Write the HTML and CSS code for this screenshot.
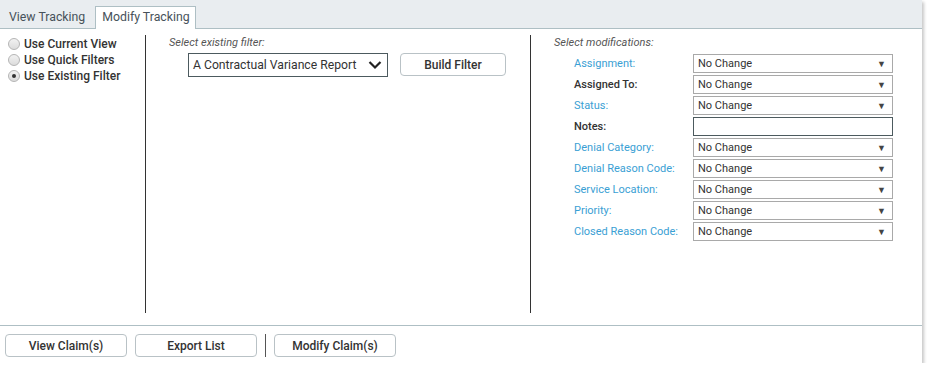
FILE: index.html
```html
<!DOCTYPE html>
<html>
<head>
<meta charset="utf-8">
<link rel="stylesheet" href="styles.css">
</head>
<body>
<div class="panel">
  <div class="tabbar">
    <div class="tab">View Tracking</div>
    <div class="tab active">Modify Tracking</div>
  </div>
  <div class="content">
    <div class="col col-left">
      <label class="radio"><span class="dot"></span>Use Current View</label>
      <label class="radio"><span class="dot"></span>Use Quick Filters</label>
      <label class="radio"><span class="dot checked"></span>Use Existing Filter</label>
    </div>
    <div class="col col-mid">
      <div class="caption">Select existing filter:</div>
      <div class="filter-row">
        <div class="bigselect">
          <span>A Contractual Variance Report</span>
          <svg class="chev" width="14" height="10" viewBox="0 0 14 10"><path d="M1.5 2 L7 7.5 L12.5 2" fill="none" stroke="#222" stroke-width="2.2"/></svg>
        </div>
        <button class="btn build">Build Filter</button>
      </div>
    </div>
    <div class="col col-right">
      <div class="caption">Select modifications:</div>
      <div class="mods">
        <div class="lbl link">Assignment:</div><div class="sel">No Change<span class="arr">▼</span></div>
        <div class="lbl bold">Assigned To:</div><div class="sel">No Change<span class="arr">▼</span></div>
        <div class="lbl link">Status:</div><div class="sel">No Change<span class="arr">▼</span></div>
        <div class="lbl bold">Notes:</div><div class="sel notes"></div>
        <div class="lbl link">Denial Category:</div><div class="sel">No Change<span class="arr">▼</span></div>
        <div class="lbl link">Denial Reason Code:</div><div class="sel">No Change<span class="arr">▼</span></div>
        <div class="lbl link">Service Location:</div><div class="sel">No Change<span class="arr">▼</span></div>
        <div class="lbl link">Priority:</div><div class="sel">No Change<span class="arr">▼</span></div>
        <div class="lbl link">Closed Reason Code:</div><div class="sel">No Change<span class="arr">▼</span></div>
      </div>
    </div>
  </div>
  <div class="footer">
    <button class="btn foot">View Claim(s)</button>
    <button class="btn foot">Export List</button>
    <span class="sep"></span>
    <button class="btn foot">Modify Claim(s)</button>
  </div>
</div>
</body>
</html>
```
FILE: styles.css
```css
* { box-sizing: border-box; }
body {
  margin: 0;
  background: #fff;
  font-family: Roboto, "Liberation Sans", sans-serif;
  color: #333;
}
.panel {
  width: 922px;
  height: 363px;
  background: #fff;
  box-shadow: 2px 2px 3px rgba(0,0,0,0.22);
  display: flex;
  flex-direction: column;
}
.tabbar {
  height: 29px;
  background: #e9edf0;
  border-bottom: 1px solid #aebfc4;
  display: flex;
  align-items: flex-end;
  padding-left: 2px;
}
.tab {
  font-size: 12.3px;
  color: #47525a;
  height: 22px;
  line-height: 20px;
  padding: 0 6px;
  margin-right: 3px;
  border: 1px solid transparent;
  border-bottom: none;
  white-space: nowrap;
}
.tab.active {
  background: #fff;
  border-color: #aebfc4;
  height: 23px;
  margin-bottom: -1px;
  width: 101px;
  padding: 0 6px;
  line-height: 21px;
}
.content {
  flex: 1;
  display: flex;
  padding: 6px 0 12px;
}
.col { height: 100%; }
.col-left {
  width: 146px;
  border-right: 1px solid #333;
  padding: 1px 0 0 8px;
  display: flex;
  flex-direction: column;
}
.radio {
  display: flex;
  align-items: center;
  font-size: 12px;
  font-weight: 500;
  color: #333;
  height: 16px;
}
.dot {
  width: 12px;
  height: 12px;
  border-radius: 50%;
  border: 1px solid #b5b5b5;
  background: linear-gradient(#f2f2f2, #dcdcdc);
  margin-right: 4px;
  position: relative;
}
.dot.checked::after {
  content: "";
  position: absolute;
  left: 3px; top: 3px;
  width: 4px; height: 4px;
  border-radius: 50%;
  background: #333;
}
.col-mid {
  width: 385px;
  border-right: 1px solid #333;
  padding: 1px 0 0 23px;
}
.caption {
  font-size: 11px;
  font-style: italic;
  color: #555;
  height: 14px;
  line-height: 14px;
}
.filter-row {
  display: flex;
  align-items: flex-start;
  margin-top: 3px;
  margin-left: 19px;
}
.bigselect {
  width: 200px;
  height: 24px;
  border: 1px solid #4c5a5e;
  font-size: 12.2px;
  color: #333;
  display: flex;
  align-items: center;
  justify-content: space-between;
  padding: 0 4px 0 4px;
}
.chev { margin-right: 1px; }
.btn {
  font-family: Roboto, "Liberation Sans", sans-serif;
  background: #fff;
  border: 1px solid #b9c2c6;
  border-radius: 4px;
  color: #333;
  font-size: 12px;
  font-weight: 500;
  padding: 0;
}
.build {
  width: 106px;
  height: 23px;
  margin-left: 12px;
}
.col-right {
  flex: 1;
  padding: 1px 0 0 23px;
}
.mods {
  margin: 4px 0 0 20px;
  display: grid;
  grid-template-columns: 119px 200px;
  grid-auto-rows: 19px;
  row-gap: 2px;
}
.lbl {
  font-size: 11px;
  display: flex;
  align-items: center;
}
.lbl.link { color: #3aa0d4; }
.lbl.bold { color: #333; font-weight: 500; }
.sel {
  border: 1px solid #a9a9a9;
  font-size: 11px;
  color: #333;
  display: flex;
  align-items: center;
  justify-content: space-between;
  padding: 0 6px 0 4px;
}
.sel.notes { border-color: #4c5a5e; }
.arr { font-size: 9px; color: #444; }
.footer {
  height: 38px;
  border-top: 1px solid #aebfc4;
  display: flex;
  align-items: flex-start;
  padding: 8px 0 0 5px;
}
.foot {
  width: 122px;
  height: 23px;
  margin-right: 8px;
}
.sep {
  width: 1px;
  height: 23px;
  background: #555;
  margin-right: 8px;
}
```
